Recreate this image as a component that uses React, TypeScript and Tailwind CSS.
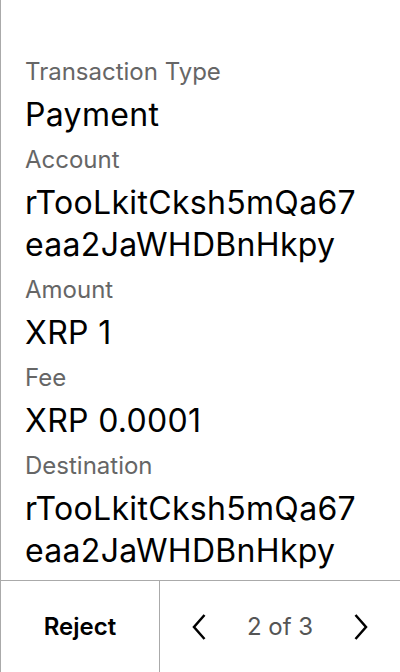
type Field = { label: string; value: string };

const fields: Field[] = [
  { label: "Transaction Type", value: "Payment" },
  { label: "Account", value: "rTooLkitCksh5mQa67eaa2JaWHDBnHkpy" },
  { label: "Amount", value: "XRP 1" },
  { label: "Fee", value: "XRP 0.0001" },
  { label: "Destination", value: "rTooLkitCksh5mQa67eaa2JaWHDBnHkpy" },
];

const Chevron = ({ dir }: { dir: "left" | "right" }) => (
  <svg width="14" height="26" viewBox="0 0 14 26" fill="none">
    <polyline
      points={dir === "left" ? "12.5,1 2,13 12.5,25" : "1.5,1 12,13 1.5,25"}
      stroke="black"
      strokeWidth="2.5"
    />
  </svg>
);

const DetailRow = ({ label, value }: Field) => (
  <div className="flex flex-col">
    <span className="text-[24px] leading-[30px] text-[#666666]">{label}</span>
    <span className="mt-[7px] text-[32px] leading-[42px] text-black break-all tracking-[0.01em]">
      {value}
    </span>
  </div>
);

export default function App() {
  return (
    <div
      className="w-[400px] h-[672px] flex flex-col bg-white border-l border-[#aaaaaa]"
      style={{ fontFamily: "Inter, 'Noto Sans', sans-serif" }}
    >
      <div className="flex-1 flex flex-col gap-[9px] pt-[57px] pl-[24px] pr-[30px]">
        {fields.map((f) => (
          <DetailRow key={f.label} label={f.label} value={f.value} />
        ))}
      </div>
      <div className="h-[92px] flex border-t border-[#aaaaaa]">
        <button className="w-[159px] flex items-center justify-center text-[24px] font-semibold text-black border-r border-[#aaaaaa]">
          Reject
        </button>
        <div className="flex-1 flex items-center justify-between px-[32px]">
          <Chevron dir="left" />
          <span className="text-[24px] text-[#555555]">2 of 3</span>
          <Chevron dir="right" />
        </div>
      </div>
    </div>
  );
}
